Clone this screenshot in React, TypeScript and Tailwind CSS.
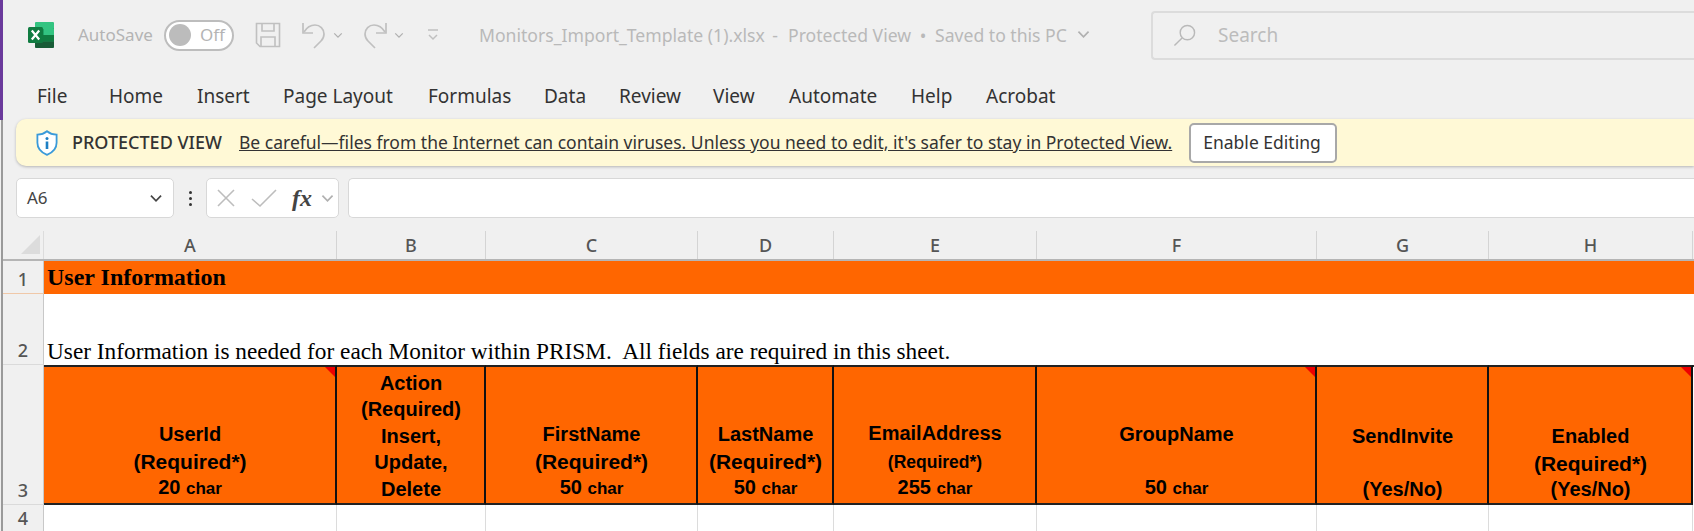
const serif = "font-['Liberation_Serif',serif]";
const ui = "font-['Noto_Sans',sans-serif]";

const tabs = [
  { label: "File", w: "w-[72px]" },
  { label: "Home", w: "w-[88px]" },
  { label: "Insert", w: "w-[86px]" },
  { label: "Page Layout", w: "w-[145px]" },
  { label: "Formulas", w: "w-[116px]" },
  { label: "Data", w: "w-[75px]" },
  { label: "Review", w: "w-[94px]" },
  { label: "View", w: "w-[76px]" },
  { label: "Automate", w: "w-[122px]" },
  { label: "Help", w: "w-[75px]" },
  { label: "Acrobat", w: "w-[80px]" },
];

const cols = ["A", "B", "C", "D", "E", "F", "G", "H"];
const colGrid = "grid grid-cols-[41px_293px_149px_212px_136px_203px_280px_172px_204px_1fr]";

const Chevron = ({ className }: { className: string }) => (
  <svg viewBox="0 0 12 8" className={className} fill="none" stroke="currentColor" strokeWidth="1.5">
    <path d="M1.5 1.5 6 6l4.5-4.5" />
  </svg>
);

const ExcelLogo = () => (
  <svg viewBox="0 0 26 26" className="w-[26px] h-[26px] shrink-0">
    <rect x="7" y="0" width="19" height="26" rx="1.5" fill="#21a366" />
    <rect x="7" y="0" width="19" height="7" rx="1.5" fill="#33c481" />
    <rect x="16" y="7" width="10" height="6" fill="#33c481" />
    <rect x="7" y="13" width="19" height="6.5" fill="#107c41" />
    <path d="M7 19.5h19V24.5a1.5 1.5 0 0 1-1.5 1.5H8.5A1.5 1.5 0 0 1 7 24.5z" fill="#185c37" />
    <rect x="0" y="5" width="15" height="16" rx="1.5" fill="#107c41" />
    <path d="m3.8 8.5 3.7 4.5-3.7 4.5M11.2 8.5 7.5 13l3.7 4.5" stroke="#fff" strokeWidth="2.2" fill="none" />
  </svg>
);

const QuickIcons = () => (
  <div className="flex items-center text-[#c0c0c0]">
    <svg viewBox="0 0 26 26" className="w-[26px] h-[26px] ml-[21px]" fill="none" stroke="currentColor" strokeWidth="1.6">
      <path d="M1.5 1.5h23v23H5l-3.5-3.5z" />
      <path d="M7 1.5v7.5h12V1.5M6 24.5V15h14v9.5" />
    </svg>
    <svg viewBox="0 0 26 28" className="w-[26px] h-[28px] ml-[20px]" fill="none" stroke="currentColor" strokeWidth="1.7">
      <path d="M2 2v10h10" />
      <path d="M3 11C6 6 10 4 14 4c5 0 9 4 9 9 0 3-1 5-3 7l-7 7" />
    </svg>
    <Chevron className="w-[10px] h-[7px] ml-[6px] text-[#b0b0b0]" />
    <svg viewBox="0 0 26 28" className="w-[26px] h-[28px] ml-[19px]" fill="none" stroke="currentColor" strokeWidth="1.7">
      <path d="M24 2v10H14" />
      <path d="M23 11C20 6 16 4 12 4 7 4 3 8 3 13c0 3 1 5 3 7l7 7" />
    </svg>
    <Chevron className="w-[10px] h-[7px] ml-[6px] text-[#b0b0b0]" />
    <svg viewBox="0 0 12 14" className="w-[12px] h-[14px] ml-[23px]" fill="none" stroke="currentColor" strokeWidth="1.5">
      <path d="M1 2h10M2 7l4 4 4-4" />
    </svg>
  </div>
);

const TitleBar = () => (
  <div className="h-[70px] flex items-center pl-[25px] shrink-0">
    <ExcelLogo />
    <span className={`${ui} text-[17px] text-[#b4b4b4] ml-[24px] w-[74px]`}>AutoSave</span>
    <div className="ml-[12px] w-[70px] h-[31px] rounded-full border-2 border-[#bdbdbd] bg-white flex items-center pl-[3px]">
      <span className="w-[22px] h-[22px] rounded-full bg-[#bcbcbc]" />
      <span className={`${ui} text-[17px] text-[#b4b4b4] ml-[9px]`}>Off</span>
    </div>
    <QuickIcons />
    <div className={`${ui} text-[17.600px] text-[#b9b9b9] ml-[40px] flex items-center whitespace-pre`}>
      <span className="w-[283px]">Monitors_Import_Template (1).xlsx</span>
      <span className="w-[26px] text-center">-</span>
      <span className="w-[123px]">Protected View</span>
      <span className="w-[24px] text-center">•</span>
      <span className="w-[132px]">Saved to this PC</span>
      <Chevron className="w-[15px] h-[9px] ml-[9px] text-[#b0b0b0]" />
    </div>
    <div className="ml-[60px] flex-1 h-[49px] rounded-l-[4px] border-2 border-r-0 border-[#dcdcdc] bg-[#f0f0f0] flex items-center pl-[20px]">
      <svg viewBox="0 0 24 24" className="w-[23px] h-[23px] text-[#b9b9b9]" fill="none" stroke="currentColor" strokeWidth="1.5">
        <circle cx="15" cy="9" r="7.5" />
        <path d="M9.5 14.5 1.5 22.5" />
      </svg>
      <span className={`${ui} text-[19px] text-[#bcbcbc] ml-[22px]`}>Search</span>
    </div>
  </div>
);

const TabRow = () => (
  <div className="h-[49px] flex items-center pl-[34px] pt-[3px] shrink-0">
    {tabs.map((t) => (
      <span key={t.label} className={`${ui} text-[19px] text-[#333] whitespace-nowrap ${t.w}`}>
        {t.label}
      </span>
    ))}
  </div>
);

const Banner = () => (
  <div className="h-[47px] ml-[13px] rounded-l-[10px] bg-[#fff9d6] shadow-[0_1px_3px_rgba(0,0,0,0.25)] flex items-center pl-[20px] shrink-0">
    <svg viewBox="0 0 22 26" className="w-[22px] h-[26px] shrink-0">
      <path d="M11 1.2c2.6 2.2 5.6 3.3 9.6 3.5v8c0 5.500-3.500 9.600-9.600 12.100C4.900 22.300 1.400 18.200 1.400 12.700v-8c4-.2 7-1.300 9.600-3.500z" fill="#fff" stroke="#3a9ad9" strokeWidth="1.800" />
      <circle cx="11" cy="8.500" r="1.500" fill="#1d7fc4" />
      <rect x="9.700" y="11.500" width="2.600" height="7.500" fill="#1d7fc4" />
    </svg>
    <span className={`${ui} text-[18px] font-medium text-[#333] ml-[14px] w-[167px] whitespace-nowrap`}>PROTECTED VIEW</span>
    <span className={`${ui} text-[17.500px] text-[#333] underline w-[950px] whitespace-nowrap`}>
      Be careful—files from the Internet can contain viruses. Unless you need to edit, it's safer to stay in Protected View.
    </span>
    <button className={`${ui} w-[148px] h-[40px] bg-white border-2 border-[#a8a8a8] rounded-[5px] pr-[2px] text-[17.500px] text-[#333]`}>
      Enable Editing
    </button>
  </div>
);

const FormulaBar = () => (
  <div className="h-[40px] mt-[12px] ml-[13px] flex items-center shrink-0">
    <div className="w-[158px] h-[40px] bg-white rounded-[5px] border border-[#d8d8d8] flex items-center justify-between pl-[10px] pr-[10px]">
      <span className={`${ui} text-[17px] text-[#444]`}>A6</span>
      <Chevron className="w-[14px] h-[9px] text-[#444]" />
    </div>
    <div className="w-[32px] flex flex-col items-center gap-[3px]">
      <span className="w-[3px] h-[3px] bg-[#333] rounded-full" />
      <span className="w-[3px] h-[3px] bg-[#333] rounded-full" />
      <span className="w-[3px] h-[3px] bg-[#333] rounded-full" />
    </div>
    <div className="w-[133px] h-[40px] bg-white rounded-[5px] border border-[#d8d8d8] flex items-center pl-[9px]">
      <svg viewBox="0 0 20 20" className="w-[20px] h-[20px] text-[#bdbdbd]" fill="none" stroke="currentColor" strokeWidth="1.6">
        <path d="m2 2 16 16M18 2 2 18" />
      </svg>
      <svg viewBox="0 0 26 20" className="w-[26px] h-[20px] ml-[15px] text-[#bdbdbd]" fill="none" stroke="currentColor" strokeWidth="1.6">
        <path d="m1 11 8 7L25 2" />
      </svg>
      <span className={`${serif} italic font-bold text-[24px] leading-none text-[#444] ml-[15px] w-[24px]`}>fx</span>
      <Chevron className="w-[15px] h-[9px] text-[#b0b0b0] ml-[4px]" />
    </div>
    <div className="ml-[9px] flex-1 h-[40px] bg-white rounded-l-[5px] border border-r-0 border-[#d8d8d8]" />
  </div>
);

const RowNum = ({ n, className }: { n: number; className: string }) => (
  <div className={`${ui} bg-[#f0f0f0] border-b border-[#dadada] border-r border-r-[#c8c8c8] flex items-end justify-center text-[18px] font-medium leading-[27px] text-[#555] ${className}`}>
    {n}
  </div>
);

type HeaderCell = {
  lines: React.ReactNode[];
  note?: boolean;
};

const Char = ({ n }: { n: string }) => (
  <>
    {n} <span className="text-[17px]">char</span>
  </>
);

const Req = () => <span className="inline-block translate-y-[2px] text-[21px]">(Required*)</span>;

const headers: HeaderCell[] = [
  { lines: ["UserId", <Req />, <Char n="20" />], note: true },
  { lines: ["Action", "(Required)", "Insert,", "Update,", "Delete"] },
  { lines: ["FirstName", <Req />, <Char n="50" />] },
  { lines: ["LastName", <Req />, <Char n="50" />] },
  { lines: ["EmailAddress", <span className="inline-block translate-y-[2px] text-[17.500px]">(Required*)</span>, <Char n="255" />] },
  { lines: ["GroupName", "\u00a0", <Char n="50" />], note: true },
  { lines: ["SendInvite", "\u00a0", "(Yes/No)"] },
  { lines: ["Enabled", <Req />, "(Yes/No)"], note: true },
];

const Sheet = () => (
  <div className="mt-[13px] flex-1 flex flex-col">
    <div className={`${colGrid} h-[28px]`}>
      <div className="bg-[#f0f0f0] border-r border-[#dcdcdc] relative">
        <span className="absolute right-[3px] bottom-[5px] border-b-[19px] border-l-[19px] border-b-[#dcdcdc] border-l-transparent" />
      </div>
      {cols.map((c) => (
        <div key={c} className={`${ui} border-r border-[#d4d4d4] text-center text-[18px] leading-[28px] font-medium text-[#555]`}>
          {c}
        </div>
      ))}
      <div />
    </div>
    <div className="h-[2px] bg-[#b5b5b5] shrink-0" />

    <div className={`${colGrid} h-[33px]`}>
      <RowNum n={1} className="h-[33px] border-b-[#f0c8a8]" />
      <div className={`${serif} col-span-9 bg-[#ff6600] text-[24px] font-bold text-black leading-[33px] pl-[3px]`}>
        User Information
      </div>
    </div>

    <div className={`${colGrid} h-[71px]`}>
      <RowNum n={2} className="h-[71px]" />
      <div className={`${serif} col-span-9 bg-white flex items-end text-[23.300px] text-black leading-[27px] pl-[3px] whitespace-pre`}>
        User Information is needed for each Monitor within PRISM.  All fields are required in this sheet.
      </div>
    </div>

    <div className={`${colGrid} h-[140px]`}>
      <RowNum n={3} className="h-[140px]" />
      {headers.map((h, i) => (
        <div
          key={i}
          className="relative bg-[#ff6600] border-y-2 border-y-[#222] border-r-2 border-r-[#111] flex flex-col justify-end items-center pb-[1px] pl-[1px] font-['Liberation_Sans',sans-serif] font-bold text-[20px] leading-[26.500px] text-black text-center"
        >
          {h.note && (
            <span className="absolute top-0 right-0 border-t-[10px] border-l-[10px] border-t-[#ee0000] border-l-transparent" />
          )}
          {h.lines.map((line, j) => (
            <div key={j}>{line}</div>
          ))}
        </div>
      ))}
      <div className="bg-white border-t-2 border-[#222]" />
    </div>

    <div className={`${colGrid} flex-1`}>
      <RowNum n={4} className="border-b-0" />
      {cols.map((c) => (
        <div key={c} className="bg-white border-r border-[#dcdcdc]" />
      ))}
      <div className="bg-white" />
    </div>
  </div>
);

export default function App() {
  return (
    <div className="w-[1694px] h-[531px] overflow-hidden bg-[#f0f0f0] flex">
      <div className="w-[3px] shrink-0 flex flex-col">
        <div className="h-[120px] bg-[#6b3a9c]" />
        <div className="flex-1 ml-[1px] bg-[#9a9a9a]" />
      </div>
      <div className="flex-1 flex flex-col min-w-0">
        <TitleBar />
        <TabRow />
        <Banner />
        <FormulaBar />
        <Sheet />
      </div>
    </div>
  );
}
